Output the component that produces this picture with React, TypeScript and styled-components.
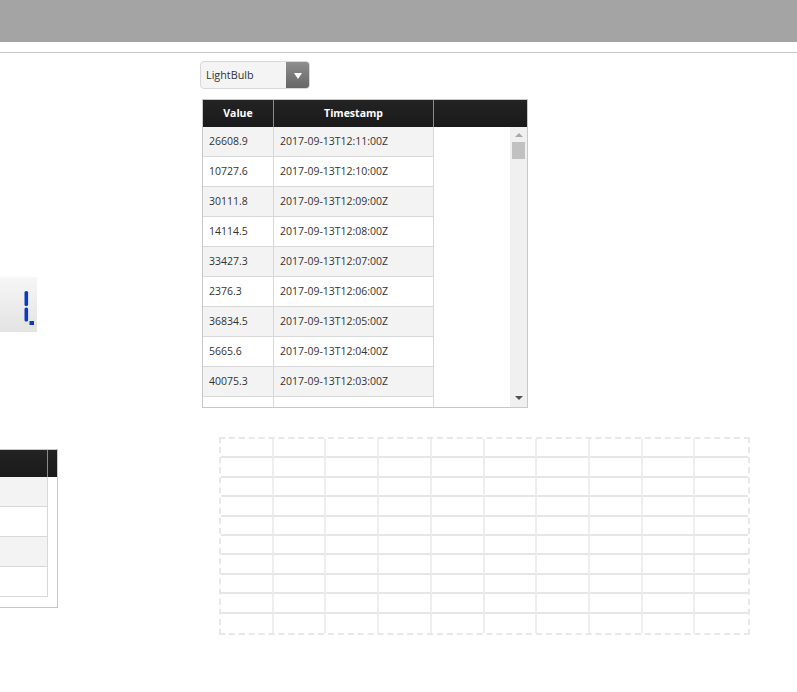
import React from "react";
import styled, { createGlobalStyle } from "styled-components";

const GlobalStyle = createGlobalStyle`
  html, body {
    margin: 0;
    padding: 0;
    background: #ffffff;
    font-family: "Open Sans", "Noto Sans", Arial, sans-serif;
    color: #333333;
  }
  * {
    box-sizing: border-box;
  }
`;

const rows = [
  { value: "26608.9", time: "2017-09-13T12:11:00Z" },
  { value: "10727.6", time: "2017-09-13T12:10:00Z" },
  { value: "30111.8", time: "2017-09-13T12:09:00Z" },
  { value: "14114.5", time: "2017-09-13T12:08:00Z" },
  { value: "33427.3", time: "2017-09-13T12:07:00Z" },
  { value: "2376.3", time: "2017-09-13T12:06:00Z" },
  { value: "36834.5", time: "2017-09-13T12:05:00Z" },
  { value: "5665.6", time: "2017-09-13T12:04:00Z" },
  { value: "40075.3", time: "2017-09-13T12:03:00Z" },
  { value: "9640.2", time: "2017-09-13T12:02:00Z" },
];

const Page = styled.div`
  width: 797px;
  height: 692px;
  overflow: hidden;
`;

const TopBar = styled.header`
  height: 42px;
  background: #a4a4a4;
`;

const Divider = styled.div`
  margin-top: 10px;
  height: 1px;
  background: #c6c6c8;
`;

const Content = styled.main`
  display: grid;
  grid-template-columns: 200px 1fr;
`;

const LeftColumn = styled.section`
  overflow: hidden;
  padding-top: 224px;
  display: flex;
  flex-direction: column;
  align-items: flex-start;
  gap: 117px;
`;

const RightColumn = styled.section`
  padding-top: 8px;
  display: flex;
  flex-direction: column;
  align-items: flex-start;
`;

/* ---------- digital display widget ---------- */

const DisplayBox = styled.div`
  width: 150px;
  height: 55px;
  margin-left: -113px;
  background: linear-gradient(#f6f6f6, #e3e3e3);
  display: flex;
  align-items: center;
  justify-content: flex-end;
  padding-right: 2px;
`;

const Digit = () => (
  <svg width="12" height="40" viewBox="0 0 12 40">
    <rect x="1.5" y="6" width="3.6" height="15" rx="1.6" fill="#0a3cc2" />
    <rect x="1.5" y="22.5" width="3.6" height="14" rx="1.6" fill="#0a3cc2" />
    <rect x="6.5" y="36" width="4.5" height="4.5" fill="#0a3cc2" />
  </svg>
);

/* ---------- dropdown ---------- */

const Select = styled.div`
  width: 110px;
  height: 28px;
  display: flex;
  border: 1px solid #d8d8d8;
  border-radius: 4px;
  background: #f4f4f4;
  overflow: hidden;
`;

const SelectLabel = styled.span`
  flex: 1;
  font-size: 10.8px;
  line-height: 26px;
  padding-left: 5px;
  color: #333;
`;

const SelectButton = styled.span`
  width: 23px;
  background: linear-gradient(#8e8e8e, #666666);
  display: flex;
  align-items: center;
  justify-content: center;
`;

const Caret = styled.span`
  width: 0;
  height: 0;
  border-left: 4px solid transparent;
  border-right: 4px solid transparent;
  border-top: 6px solid #ffffff;
  margin-top: 1px;
`;

/* ---------- data grid ---------- */

const GridFrame = styled.div<{ $width: number; $shift?: number; $gapTop?: number }>`
  width: ${({ $width }) => $width}px;
  margin-left: ${({ $shift = 0 }) => $shift}px;
  margin-top: ${({ $gapTop = 0 }) => $gapTop}px;
  border: 1px solid #c8c8c8;
  background: #fff;
`;

const GridHead = styled.div`
  display: flex;
  height: 27px;
  background: linear-gradient(#232323, #1a1a1a);
`;

const HeadCell = styled.div<{ $w?: number }>`
  ${({ $w }) => ($w ? `width: ${$w}px;` : "flex: 1;")}
  border-right: 1px solid #8a8a8a;
  color: #fff;
  font-weight: 700;
  font-size: 10.5px;
  line-height: 26px;
  text-align: center;
  &:last-child {
    border-right: none;
  }
`;

const GridBody = styled.div<{ $height: number }>`
  display: flex;
  height: ${({ $height }) => $height}px;
`;

const RowsArea = styled.div`
  flex: 1;
  overflow: hidden;
`;

const DataRow = styled.div<{ $alt: boolean; $width: number }>`
  display: flex;
  width: ${({ $width }) => $width}px;
  height: 30px;
  background: ${({ $alt }) => ($alt ? "#f3f3f3" : "#ffffff")};
  border-bottom: 1px solid #d8d8d8;
  border-right: 1px solid #d8d8d8;
`;

const DataCell = styled.div<{ $w?: number }>`
  ${({ $w }) => ($w ? `width: ${$w}px;` : "flex: 1;")}
  border-right: 1px solid #d8d8d8;
  font-size: 10.5px;
  line-height: 29px;
  padding-left: 6px;
  white-space: nowrap;
  color: #333;
  &:last-child {
    border-right: none;
  }
`;

const ScrollTrack = styled.div`
  width: 17px;
  background: #f0f0f0;
  display: flex;
  flex-direction: column;
  align-items: center;
`;

const ArrowUp = styled.span`
  margin-top: 6px;
  width: 0;
  height: 0;
  border-left: 4px solid transparent;
  border-right: 4px solid transparent;
  border-bottom: 4px solid #a8a8a8;
`;

const ArrowDown = styled.span`
  margin-top: auto;
  margin-bottom: 7px;
  width: 0;
  height: 0;
  border-left: 4px solid transparent;
  border-right: 4px solid transparent;
  border-top: 4px solid #505050;
`;

const Thumb = styled.span`
  margin-top: 5px;
  width: 13px;
  height: 17px;
  background: #c1c1c1;
`;

/* ---------- empty layout grid ---------- */

const EmptyGrid = styled.div`
  margin-top: 29px;
  margin-left: 19px;
  width: 531px;
  height: 198px;
  border: 2px dashed #e8e8e8;
  display: grid;
  grid-template-columns: repeat(10, 1fr);
  grid-template-rows: repeat(10, 1fr);
`;

const EmptyCell = styled.div<{ $lastCol: boolean; $lastRow: boolean }>`
  border-right: ${({ $lastCol }) => ($lastCol ? "none" : "2px solid #eeeeee")};
  border-bottom: ${({ $lastRow }) => ($lastRow ? "none" : "2px solid #e6e6e6")};
`;

const App: React.FC = () => {
  return (
    <Page>
      <GlobalStyle />
      <TopBar />
      <Divider />
      <Content>
        <LeftColumn>
          <DisplayBox>
            <Digit />
          </DisplayBox>

          <GridFrame $width={290} $shift={-232}>
            <GridHead>
              <HeadCell $w={70} />
              <HeadCell $w={209} />
              <HeadCell />
            </GridHead>
            <GridBody $height={130}>
              <RowsArea>
                {[0, 1, 2, 3].map((i) => (
                  <DataRow key={i} $alt={i % 2 === 0} $width={279}>
                    <DataCell $w={70} />
                    <DataCell />
                  </DataRow>
                ))}
              </RowsArea>
            </GridBody>
          </GridFrame>
        </LeftColumn>

        <RightColumn>
          <Select>
            <SelectLabel>LightBulb</SelectLabel>
            <SelectButton>
              <Caret />
            </SelectButton>
          </Select>

          <GridFrame $width={326} $shift={2} $gapTop={10}>
            <GridHead>
              <HeadCell $w={71}>Value</HeadCell>
              <HeadCell $w={160}>Timestamp</HeadCell>
              <HeadCell />
            </GridHead>
            <GridBody $height={280}>
              <RowsArea>
                {rows.map((r, i) => (
                  <DataRow key={r.time} $alt={i % 2 === 0} $width={231}>
                    <DataCell $w={71}>{r.value}</DataCell>
                    <DataCell>{r.time}</DataCell>
                  </DataRow>
                ))}
              </RowsArea>
              <ScrollTrack>
                <ArrowUp />
                <Thumb />
                <ArrowDown />
              </ScrollTrack>
            </GridBody>
          </GridFrame>

          <EmptyGrid>
            {Array.from({ length: 100 }).map((_, i) => (
              <EmptyCell key={i} $lastCol={i % 10 === 9} $lastRow={i >= 90} />
            ))}
          </EmptyGrid>
        </RightColumn>
      </Content>
    </Page>
  );
};

export default App;
